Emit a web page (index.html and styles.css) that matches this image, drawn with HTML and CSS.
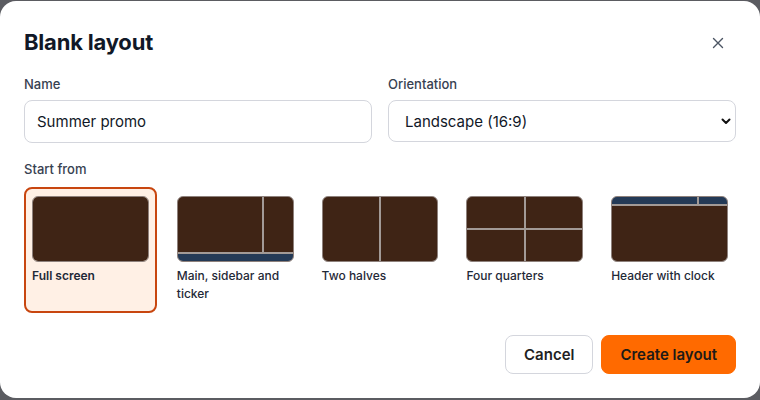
FILE: index.html
```html
<!DOCTYPE html>
<html>

<head>
    <link rel="stylesheet" href="styles.css">
</head>

<body>
    <div class="dialog">
        <div class="head">
            <h1>Blank layout</h1>
            <span class="close">
                <svg width="12" height="12" viewBox="0 0 12 12">
                    <path d="M1.5 1.5 L10.5 10.5 M10.5 1.5 L1.5 10.5" stroke="#4b5563" stroke-width="1.4" stroke-linecap="round" />
                </svg>
            </span>
        </div>

        <div class="fields">
            <div class="field">
                <label>Name</label>
                <input class="text" type="text" value="Summer promo">
            </div>
            <div class="field">
                <label>Orientation</label>
                <div class="select-wrap">
                    <select class="select">
                        <option>Landscape (16:9)</option>
                        <option>Portrait (9:16)</option>
                    </select>
                    <svg class="chev" width="10" height="7" viewBox="0 0 10 7">
                        <path d="M1.5 1.5 L5 5 L8.5 1.5" fill="none" stroke="#111" stroke-width="2" stroke-linecap="round" stroke-linejoin="round" />
                    </svg>
                </div>
            </div>
        </div>

        <label class="section">Start from</label>
        <div class="cards">
            <div class="card select-on">
                <div class="thumb full">
                    <i></i>
                </div>
                <span>Full screen</span>
            </div>
            <div class="card">
                <div class="thumb sidebar">
                    <i></i><i></i><b class="band"></b>
                </div>
                <span>Main, sidebar and ticker</span>
            </div>
            <div class="card">
                <div class="thumb halves">
                    <i></i><i></i>
                </div>
                <span>Two halves</span>
            </div>
            <div class="card">
                <div class="thumb quarters">
                    <i></i><i></i><i></i><i></i>
                </div>
                <span>Four quarters</span>
            </div>
            <div class="card">
                <div class="thumb header">
                    <b></b><b></b><i class="main"></i>
                </div>
                <span>Header with clock</span>
            </div>
        </div>

        <div class="foot">
            <button class="btn">Cancel</button>
            <button class="btn primary">Create layout</button>
        </div>
    </div>
</body>

</html>
```

FILE: styles.css
```css
* {
    padding: 0;
    margin: 0;
    box-sizing: border-box;
}

body {
    background: #5b5c61;
    font-family: Inter, "Liberation Sans", sans-serif;
    color: #111827;
    height: 400px;
    overflow: hidden;
}

.dialog {
    background: #fff;
    margin-top: 1px;
    height: 397px;
    border-radius: 16px;
    padding: 27px 24px 0;
}

.head {
    display: flex;
    justify-content: space-between;
    align-items: center;
    height: 28px;
}

.head h1 {
    font-size: 22px;
    line-height: 28px;
    font-weight: 700;
    letter-spacing: -0.2px;
}

.close {
    display: flex;
    margin-right: 12px;
    margin-top: 2px;
}

.fields {
    display: flex;
    gap: 16px;
    margin-top: 18px;
}

.field {
    flex: 1;
    display: flex;
    flex-direction: column;
}

label {
    display: block;
    font-size: 13px;
    line-height: 20px;
    font-weight: 500;
    color: #374151;
    margin-bottom: 6px;
}

.text,
.select {
    font-family: inherit;
    font-size: 15px;
    color: #111827;
    border: 1px solid #d4d6dd;
    border-radius: 8px;
    background: #fff;
    outline: none;
}

.text {
    height: 43px;
    padding: 0 12px;
}

.select-wrap {
    position: relative;
}

.select {
    width: 100%;
    height: 42px;
    padding: 0 16px;
    appearance: none;
    -webkit-appearance: none;
}

.chev {
    position: absolute;
    right: 5px;
    top: 18px;
}

.section {
    margin-top: 16px;
    margin-bottom: 8px;
}

.cards {
    display: flex;
    gap: 12px;
}

.card {
    flex: 1;
    border: 2px solid transparent;
    border-radius: 8px;
    padding: 7px 6px 8px;
}

.card.select-on {
    border-color: #c8460f;
    background: #fff0e5;
}

.card span {
    display: block;
    margin-top: 5px;
    font-size: 12px;
    line-height: 18px;
    font-weight: 500;
    color: #1f2937;
}

.card.select-on span {
    font-weight: 600;
}

.thumb {
    aspect-ratio: 16 / 9;
    border: 1px solid #8e817c;
    border-radius: 6px;
    overflow: hidden;
    background: #a29a96;
    display: grid;
    gap: 2px;
}

.thumb i {
    background: #3f2415;
}

.thumb b {
    background: #243a56;
}

.thumb.sidebar {
    grid-template-columns: 3fr 1fr;
    grid-template-rows: 1fr 7px;
}

.thumb.sidebar .band {
    grid-column: 1 / 3;
}

.thumb.halves {
    grid-template-columns: 1fr 1fr;
}

.thumb.quarters {
    grid-template-columns: 1fr 1fr;
    grid-template-rows: 1fr 1fr;
}

.thumb.header {
    grid-template-columns: 3fr 1fr;
    grid-template-rows: 7px 1fr;
}

.thumb.header .main {
    grid-column: 1 / 3;
}

.foot {
    display: flex;
    justify-content: flex-end;
    gap: 8px;
    margin-top: 22px;
}

.btn {
    font-family: inherit;
    font-size: 15px;
    font-weight: 600;
    color: #1f1f23;
    height: 39px;
    padding: 0 18px;
    border: 1px solid #d4d6dd;
    border-radius: 8px;
    background: #fff;
}

.btn.primary {
    background: #ff6a00;
    border-color: #ff6a00;
    color: #201a17;
}
```
